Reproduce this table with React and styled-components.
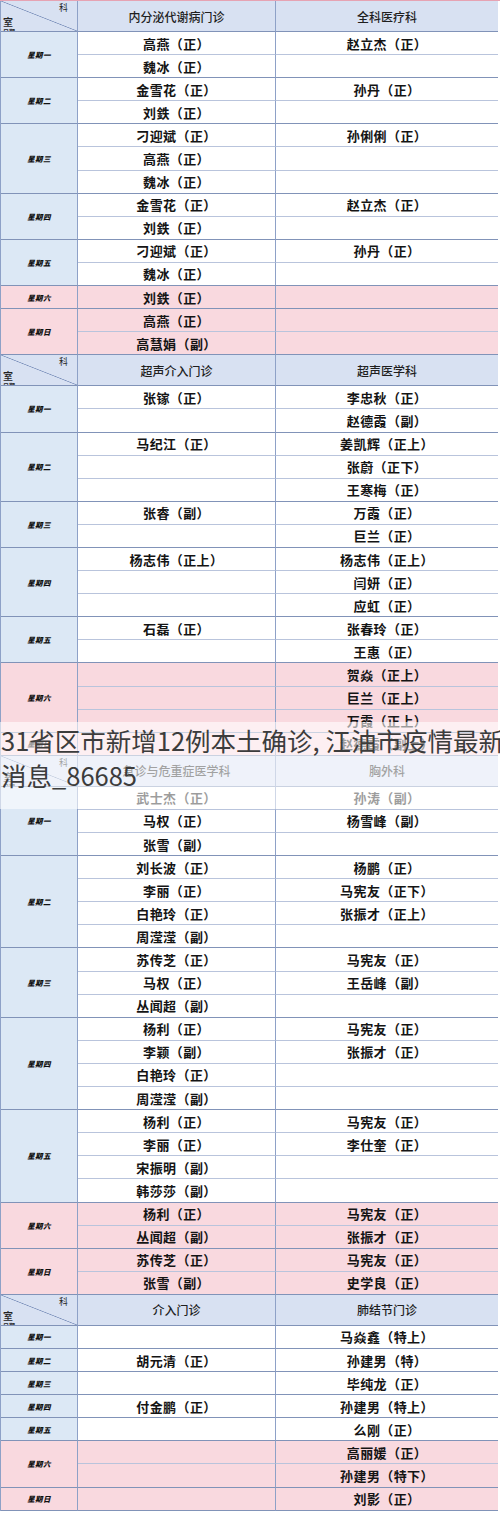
import React from 'react';
import styled, { createGlobalStyle } from 'styled-components';

const GlobalStyle = createGlobalStyle`
  html, body { margin: 0; padding: 0; background: #ffffff; }
  body {
    width: 500px;
    overflow-x: hidden;
    font-family: "Noto Sans CJK SC", "Noto Sans", sans-serif;
  }
`;

const C = {
  head: '#d8e1f2',
  day: '#dce8f5',
  pink: '#f9d9df',
  white: '#ffffff',
  vline: '#8ea1c7',
  group: '#8193b8',
  row: '#b9c4dc',
};

const Page = styled.main`
  position: relative;
  width: 500px;
  overflow: hidden;
  border-top: 1px solid #e6a3b3;
`;

const Section = styled.section`
  display: grid;
  grid-template-columns: 77px 198px 222px;
  grid-template-rows: 31px;
  grid-auto-rows: 23.1px;
  width: 498px;
  border-left: 1px solid ${C.vline};
  border-right: 1px solid ${C.vline};
  box-sizing: border-box;
`;

const Corner = styled.div`
  display: flex;
  flex-direction: column;
  overflow: hidden;
  box-sizing: border-box;
  background: ${C.head} linear-gradient(to top right, transparent calc(50% - 0.7px), #7a8fba 50%, transparent calc(50% + 0.7px));
  border-right: 1px solid ${C.vline};
  border-bottom: 1px solid ${C.group};
  color: #222;
`;

const KeLabel = styled.span`
  align-self: flex-end;
  margin: 2px 9px 0 0;
  font-size: 9px;
  line-height: 10px;
`;

const ShiLabel = styled.span`
  align-self: flex-start;
  margin: 3px 0 0 2px;
  font-size: 10px;
  line-height: 11px;
  font-weight: 500;
`;

const DateLabel = styled.span`
  align-self: flex-start;
  margin: 1px 0 0 2px;
  font-size: 6px;
  line-height: 7px;
  font-weight: 700;
`;

const HeadCell = styled.div`
  display: flex;
  align-items: center;
  justify-content: center;
  box-sizing: border-box;
  background: ${C.head};
  border-right: ${p => (p.$last ? 'none' : `1px solid ${C.vline}`)};
  border-bottom: 1px solid ${C.group};
  font-size: 12px;
  font-weight: 500;
  color: #1f1f1f;
`;

const DayCell = styled.div`
  grid-column: 1;
  grid-row: span ${p => p.$span};
  display: flex;
  align-items: center;
  justify-content: center;
  box-sizing: border-box;
  background: ${p => (p.$weekend ? C.pink : C.day)};
  border-right: 1px solid ${C.vline};
  border-bottom: 1px solid ${C.group};
  font-size: 7.5px;
  font-weight: 900;
  font-style: italic;
  letter-spacing: 0.3px;
  color: #111;
`;

const DataCell = styled.div`
  grid-column: ${p => p.$col};
  display: flex;
  align-items: center;
  justify-content: center;
  box-sizing: border-box;
  background: ${p => (p.$weekend ? C.pink : C.white)};
  border-right: ${p => (p.$col === 2 ? `1px solid ${C.vline}` : 'none')};
  border-bottom: 1px solid ${p => (p.$groupEnd ? C.group : C.row)};
  font-size: 13px;
  font-weight: 700;
  letter-spacing: 0.4px;
  color: #141414;
  white-space: nowrap;
`;

const Overlay = styled.div`
  position: absolute;
  top: 721px;
  left: 0;
  width: 540px;
  padding: 0 0 17px 1px;
  background: rgba(255, 255, 255, 0.58);
  font-family: "Noto Sans CJK SC", "Noto Sans", sans-serif;
  font-size: 25.5px;
  line-height: 35px;
  font-weight: 400;
  color: #3c3c3c;
  white-space: nowrap;
`;

const OverlayLine = styled.div``;

const sections = [
  {
    heads: ['内分泌代谢病门诊', '全科医疗科'],
    days: [
      ['星期一', [['高燕（正）', '赵立杰（正）'], ['魏冰（正）', '']]],
      ['星期二', [['金雪花（正）', '孙丹（正）'], ['刘鉄（正）', '']]],
      ['星期三', [['刁迎斌（正）', '孙俐俐（正）'], ['高燕（正）', ''], ['魏冰（正）', '']]],
      ['星期四', [['金雪花（正）', '赵立杰（正）'], ['刘鉄（正）', '']]],
      ['星期五', [['刁迎斌（正）', '孙丹（正）'], ['魏冰（正）', '']]],
      ['星期六', [['刘鉄（正）', '']], true],
      ['星期日', [['高燕（正）', ''], ['高慧娟（副）', '']], true],
    ],
  },
  {
    heads: ['超声介入门诊', '超声医学科'],
    days: [
      ['星期一', [['张镓（正）', '李忠秋（正）'], ['', '赵德霞（副）']]],
      ['星期二', [['马纪江（正）', '姜凯辉（正上）'], ['', '张蔚（正下）'], ['', '王寒梅（正）']]],
      ['星期三', [['张睿（副）', '万霞（正）'], ['', '巨兰（正）']]],
      ['星期四', [['杨志伟（正上）', '杨志伟（正上）'], ['', '闫妍（正）'], ['', '应虹（正）']]],
      ['星期五', [['石磊（正）', '张春玲（正）'], ['', '王惠（正）']]],
      ['星期六', [['', '贺焱（正上）'], ['', '巨兰（正上）'], ['', '万霞（正上）']], true],
      ['星期日', [['', '赵德霞（副上）']], true],
    ],
  },
  {
    heads: ['急诊与危重症医学科', '胸外科'],
    days: [
      ['星期一', [['武士杰（正）', '孙涛（副）'], ['马权（正）', '杨雪峰（副）'], ['张雪（副）', '']]],
      ['星期二', [['刘长波（正）', '杨鹏（正）'], ['李丽（正）', '马宪友（正下）'], ['白艳玲（正）', '张振才（正上）'], ['周滢滢（副）', '']]],
      ['星期三', [['苏传芝（正）', '马宪友（正）'], ['马权（正）', '王岳峰（副）'], ['丛闻超（副）', '']]],
      ['星期四', [['杨利（正）', '马宪友（正）'], ['李颖（副）', '张振才（正）'], ['白艳玲（正）', ''], ['周滢滢（副）', '']]],
      ['星期五', [['杨利（正）', '马宪友（正）'], ['李丽（正）', '李仕奎（正）'], ['宋振明（副）', ''], ['韩莎莎（副）', '']]],
      ['星期六', [['杨利（正）', '马宪友（正）'], ['丛闻超（副）', '张振才（正）']], true],
      ['星期日', [['苏传芝（正）', '马宪友（正）'], ['张雪（副）', '史学良（正）']], true],
    ],
  },
  {
    heads: ['介入门诊', '肺结节门诊'],
    days: [
      ['星期一', [['', '马焱鑫（特上）']]],
      ['星期二', [['胡元清（正）', '孙建男（特）']]],
      ['星期三', [['', '毕纯龙（正）']]],
      ['星期四', [['付金鹏（正）', '孙建男（特上）']]],
      ['星期五', [['', '么刚（正）']]],
      ['星期六', [['', '高丽媛（正）'], ['', '孙建男（特下）']], true],
      ['星期日', [['', '刘影（正）']], true],
    ],
  },
];

function ScheduleSection({ heads, days }) {
  return (
    <Section>
      <Corner>
        <KeLabel>科</KeLabel>
        <ShiLabel>室</ShiLabel>
        <DateLabel>日期</DateLabel>
      </Corner>
      <HeadCell>{heads[0]}</HeadCell>
      <HeadCell $last>{heads[1]}</HeadCell>
      {days.map(([label, rows, weekend]) => (
        <React.Fragment key={label}>
          <DayCell $span={rows.length} $weekend={weekend}>{label}</DayCell>
          {rows.map((r, i) => (
            <React.Fragment key={i}>
              <DataCell $col={2} $weekend={weekend} $groupEnd={i === rows.length - 1}>{r[0]}</DataCell>
              <DataCell $col={3} $weekend={weekend} $groupEnd={i === rows.length - 1}>{r[1]}</DataCell>
            </React.Fragment>
          ))}
        </React.Fragment>
      ))}
    </Section>
  );
}

export default function App() {
  return (
    <>
      <GlobalStyle />
      <Page>
        {sections.map((s, i) => (
          <ScheduleSection key={i} heads={s.heads} days={s.days} />
        ))}
        <Overlay>
          <OverlayLine>31省区市新增12例本土确诊, 江油市疫情最新</OverlayLine>
          <OverlayLine>消息_86685</OverlayLine>
        </Overlay>
      </Page>
    </>
  );
}
